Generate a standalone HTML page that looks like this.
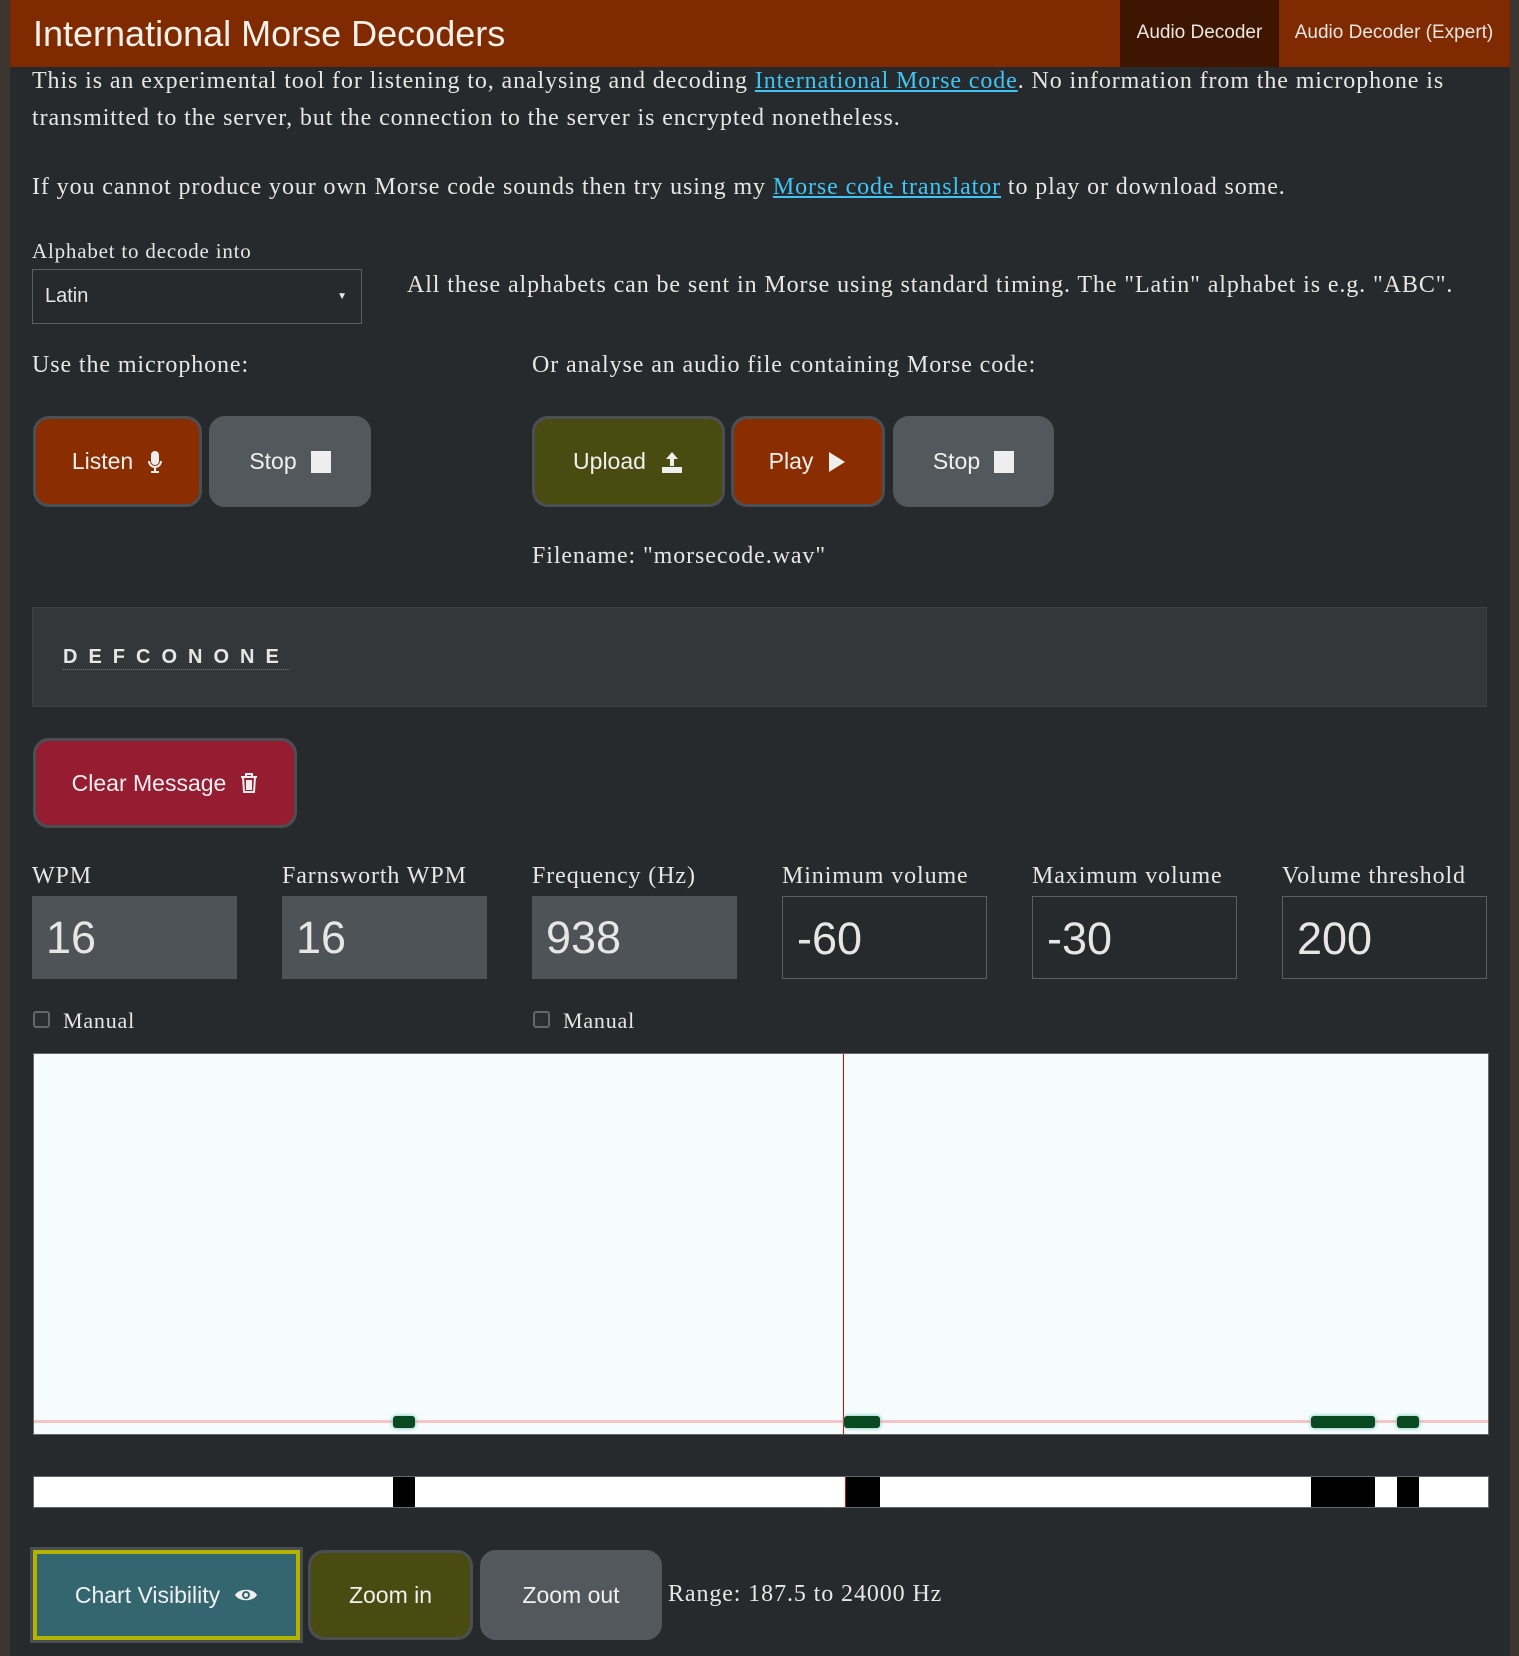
<!DOCTYPE html>
<html><head><meta charset="utf-8"><style>
*{box-sizing:border-box;margin:0;padding:0}
body{width:1519px;height:1656px;background:#3d3530;position:relative;overflow:hidden;font-family:"Liberation Serif",serif;color:#e8e6e3}
#main{position:absolute;left:10px;top:0;width:1500px;height:1656px;background:#262a2c}
.a{position:absolute;white-space:nowrap}
.hdr{position:absolute;left:10px;top:0;width:1500px;height:67px;background:#7f2a00}
.s{font-family:"Liberation Sans",sans-serif}
a{color:#3ec5f5;text-decoration:underline}
p{font-size:24px;letter-spacing:0.9px}
.btn{position:absolute;border-radius:16px;border:3px solid #4a4f54;font-family:"Liberation Sans",sans-serif;font-size:23px;color:#f0f0f0;display:flex;align-items:center;justify-content:center;gap:14px}
.lbl{font-size:24px;letter-spacing:0.9px}
.inp{position:absolute;top:896px;width:205px;height:83px;font-family:"Liberation Sans",sans-serif;font-size:45px;padding-left:14px;line-height:83px;color:#e8e6e3}
.f{background:#4e5358}
.o{border:1px solid #5a5f63;background:#262a2c}
.cb{position:absolute;width:17px;height:17px;border:2px solid #666;border-radius:3px;background:#2a2e30}
.mk{position:absolute;background:#000}
.bl{position:absolute;background:#0a4a20;height:12px;top:1416px;border-radius:3px;box-shadow:0 0 4px #6bb}
</style></head><body>
<div id="main"></div>
<div class="hdr"></div>
<div class="a s" style="left:33px;top:13px;font-size:36px;color:#f4f0ea">International Morse Decoders</div>
<div class="a s" style="left:1120px;top:0;width:159px;height:67px;background:#3e1600;font-size:19px;line-height:66px;text-align:center">Audio Decoder</div>
<div class="a s" style="left:1279px;top:0;width:230px;height:67px;font-size:19px;line-height:66px;text-align:center">Audio Decoder (Expert)</div>

<p class="a" style="left:32px;top:63px;line-height:37px">This is an experimental tool for listening to, analysing and decoding <a>International Morse code</a>. No information from the microphone is<br>transmitted to the server, but the connection to the server is encrypted nonetheless.</p>
<p class="a" style="left:32px;top:169px;line-height:37px">If you cannot produce your own Morse code sounds then try using my <a>Morse code translator</a> to play or download some.</p>
<div class="a" style="left:32px;top:239px;font-size:21px;letter-spacing:0.8px">Alphabet to decode into</div>
<div class="a s" style="left:32px;top:269px;width:330px;height:55px;border:1px solid #5a5f63;font-size:20px;line-height:53px;padding-left:12px">Latin<span style="position:absolute;right:14px;top:0;font-size:10px">▼</span></div>
<p class="a" style="left:407px;top:272px">All these alphabets can be sent in Morse using standard timing. The "Latin" alphabet is e.g. "ABC".</p>
<p class="a" style="left:32px;top:352px">Use the microphone:</p>
<p class="a" style="left:532px;top:352px">Or analyse an audio file containing Morse code:</p>

<div class="btn" style="left:33px;top:416px;width:169px;height:91px;background:#8a2d00">Listen <svg width="16" height="24" viewBox="0 0 16 24"><rect x="4" y="1" width="8" height="14" rx="4" fill="#eee"/><path d="M2 11a6 6 0 0 0 12 0M8 17v4M4 22h8" stroke="#eee" stroke-width="2" fill="none"/></svg></div>
<div class="btn" style="left:209px;top:416px;width:162px;height:91px;background:#53585d;border-color:#53585d">Stop <span style="width:20px;height:22px;background:#eee;display:inline-block"></span></div>
<div class="btn" style="left:532px;top:416px;width:193px;height:91px;background:#4a4b10">Upload <svg width="24" height="24" viewBox="0 0 24 24"><path d="M12 2l-6 7h4v7h4V9h4z" fill="#eee"/><rect x="2" y="17" width="20" height="6" fill="#eee"/></svg></div>
<div class="btn" style="left:731px;top:416px;width:154px;height:91px;background:#8a2d00">Play <svg width="20" height="24" viewBox="0 0 20 24"><path d="M2 2l16 10-16 10z" fill="#eee"/></svg></div>
<div class="btn" style="left:893px;top:416px;width:161px;height:91px;background:#53585d;border-color:#53585d">Stop <span style="width:20px;height:22px;background:#eee;display:inline-block"></span></div>
<p class="a" style="left:532px;top:543px">Filename: "morsecode.wav"</p>

<div class="a" style="left:32px;top:607px;width:1455px;height:100px;background:#33373a;border:1px solid #3d4246"></div>
<div class="a s" style="left:63px;top:646px;font-size:20px;font-weight:bold;letter-spacing:11px;border-bottom:1px dotted #777">DEFCONONE</div>

<div class="btn" style="left:33px;top:738px;width:264px;height:90px;background:#961c31">Clear Message <svg width="18" height="22" viewBox="0 0 18 22"><path d="M1 5h16M6 5V2h6v3M3 5l1 15h10l1-15M7 8v10M9 8v10M11 8v10" stroke="#eee" stroke-width="2" fill="none"/></svg></div>

<div class="a lbl" style="left:32px;top:863px">WPM</div>
<div class="a lbl" style="left:282px;top:863px">Farnsworth WPM</div>
<div class="a lbl" style="left:532px;top:863px">Frequency (Hz)</div>
<div class="a lbl" style="left:782px;top:863px">Minimum volume</div>
<div class="a lbl" style="left:1032px;top:863px">Maximum volume</div>
<div class="a lbl" style="left:1282px;top:863px">Volume threshold</div>
<div class="inp f" style="left:32px">16</div>
<div class="inp f" style="left:282px">16</div>
<div class="inp f" style="left:532px">938</div>
<div class="inp o" style="left:782px">-60</div>
<div class="inp o" style="left:1032px">-30</div>
<div class="inp o" style="left:1282px">200</div>

<div class="cb" style="left:33px;top:1011px"></div>
<div class="a" style="left:63px;top:1008px;font-size:22px;letter-spacing:0.8px">Manual</div>
<div class="cb" style="left:533px;top:1011px"></div>
<div class="a" style="left:563px;top:1008px;font-size:22px;letter-spacing:0.8px">Manual</div>

<div class="a" style="left:33px;top:1053px;width:1456px;height:382px;background:#f5fcfb;border:1px solid #666"></div>
<div class="a" style="left:34px;top:1420px;width:1454px;height:3px;background:#f5c5c8"></div>
<div class="a" style="left:843px;top:1054px;width:1px;height:380px;background:#e00"></div>
<div class="bl" style="left:393px;width:22px"></div>
<div class="bl" style="left:844px;width:36px"></div>
<div class="bl" style="left:1311px;width:64px"></div>
<div class="bl" style="left:1397px;width:22px"></div>

<div class="a" style="left:33px;top:1476px;width:1456px;height:32px;background:#fff;border:1px solid #666"></div>
<div class="mk" style="left:393px;top:1477px;width:22px;height:30px"></div>
<div class="mk" style="left:845px;top:1477px;width:35px;height:30px"></div>
<div class="a" style="left:845px;top:1477px;width:1px;height:30px;background:#e00"></div>
<div class="mk" style="left:1311px;top:1477px;width:64px;height:30px"></div>
<div class="mk" style="left:1397px;top:1477px;width:22px;height:30px"></div>

<div class="btn" style="left:33px;top:1550px;width:267px;height:90px;border-radius:0;background:#33666f;border:4px solid #b3b300;outline:3px solid #4a4f54">Chart Visibility <svg width="24" height="18" viewBox="0 0 24 18"><path d="M1 9C5 2 19 2 23 9 19 16 5 16 1 9z" fill="#eee"/><circle cx="12" cy="9" r="4" fill="#33666f"/><circle cx="12" cy="9" r="2" fill="#eee"/></svg></div>
<div class="btn" style="left:308px;top:1550px;width:165px;height:90px;background:#4a4b10">Zoom in</div>
<div class="btn" style="left:480px;top:1550px;width:182px;height:90px;background:#53585d;border-color:#53585d">Zoom out</div>
<p class="a" style="left:668px;top:1581px">Range: 187.5 to 24000 Hz</p>
</body></html>
